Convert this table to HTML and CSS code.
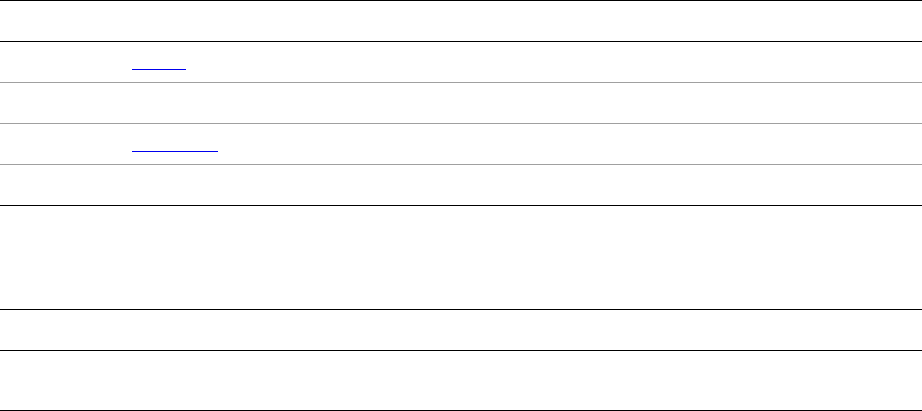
FILE: index.html
```html
<!DOCTYPE html>
<html>
<head>
<meta charset="utf-8">
<link rel="stylesheet" href="styles.css">
</head>
<body>
<div class="table">
  <div class="row head dark"></div>
  <div class="row light"><a class="link short" href="#"></a></div>
  <div class="row light"></div>
  <div class="row light"><a class="link long" href="#"></a></div>
  <div class="row dark"></div>
  <div class="row tall dark"></div>
  <div class="row dark"></div>
  <div class="row mid dark"></div>
</div>
</body>
</html>
```
FILE: styles.css
```css
html, body {
  margin: 0;
  padding: 0;
  background: #fff;
  font-family: "Liberation Sans", Arial, sans-serif;
}
.table {
  border-top: 1px solid #000;
}
.row {
  box-sizing: content-box;
  height: 40px;
  display: flex;
  align-items: flex-start;
}
.row.dark { border-bottom: 1px solid #000; }
.row.light { border-bottom: 1px solid #a0a0a0; }
.row.tall { height: 103px; }
.row.mid { height: 59px; }
.link {
  display: block;
  margin-left: 132px;
  margin-top: 27px;
  height: 0;
  border-bottom: 1px solid #0000ee;
}
.link.short { width: 54px; }
.link.long { width: 86px; }
```
